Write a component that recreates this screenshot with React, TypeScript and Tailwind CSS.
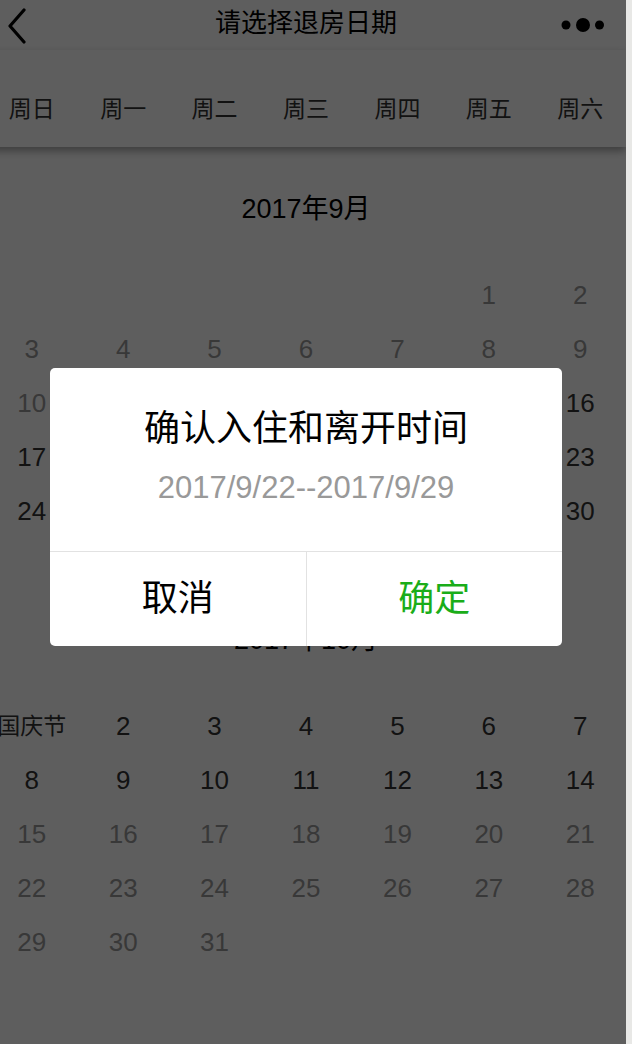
import React from "react";

const FONT = '"Liberation Sans", "Noto Sans CJK SC", sans-serif';

type Day = { label: string; gray?: boolean; sel?: boolean } | null;

function buildMonth(offset: number, days: number, isGray: (d: number) => boolean, special?: Record<number, string>, sel?: number[]): Day[][] {
  const cells: Day[] = [];
  for (let i = 0; i < offset; i++) cells.push(null);
  for (let d = 1; d <= days; d++) {
    cells.push({ label: special?.[d] ?? String(d), gray: isGray(d), sel: sel?.includes(d) });
  }
  while (cells.length % 7 !== 0) cells.push(null);
  const rows: Day[][] = [];
  for (let i = 0; i < cells.length; i += 7) rows.push(cells.slice(i, i + 7));
  return rows;
}

const sept = buildMonth(5, 30, (d) => d <= 14, undefined, [22, 29]);
const oct = buildMonth(0, 31, (d) => d >= 15, { 1: "国庆节" });

function Month({ title, rows }: { title: string; rows: Day[][] }) {
  return (
    <div className="pt-[41px] pb-[40px]">
      <div className="h-[42px] flex items-center justify-center text-[27px] text-black">{title}</div>
      <div className="mt-[38px]">
        {rows.map((r, i) => (
          <div key={i} className="grid grid-cols-7 h-[54px]">
            {r.map((c, j) => (
              <div key={j} className="flex items-center justify-center">
                {c ? (
                  c.sel ? (
                    <span className="w-[46px] h-[46px] rounded-[4px] bg-[#1aad19] text-white text-[26px] flex items-center justify-center">
                      {c.label}
                    </span>
                  ) : (
                    <span
                      className={
                        (c.label.length > 2 ? "text-[23px] " : "text-[26px] ") +
                        (c.gray ? "text-[#999999]" : "text-[#333333]")
                      }
                    >
                      {c.label}
                    </span>
                  )
                ) : null}
              </div>
            ))}
          </div>
        ))}
      </div>
    </div>
  );
}

export default function App() {
  const week = ["周日", "周一", "周二", "周三", "周四", "周五", "周六"];
  return (
    <div className="w-[632px] h-[1044px] flex overflow-hidden" style={{ fontFamily: FONT }}>
      <div className="w-[640px] shrink-0 -ml-[14px] h-[1044px] relative bg-white overflow-hidden">
        {/* nav bar */}
        <div className="h-[50px] flex items-center justify-between px-[21px] relative">
          <svg width="20" height="36" viewBox="0 0 20 36" className="mt-[2px]">
            <path d="M17 2 L3 18 L17 34" fill="none" stroke="#000" strokeWidth="3.2" strokeLinecap="round" strokeLinejoin="round" />
          </svg>
          <div className="absolute left-0 right-0 top-0 h-[47px] flex items-center justify-center text-[26px] text-black pointer-events-none">
            请选择退房日期
          </div>
          <svg width="44" height="16" viewBox="0 0 44 16">
            <circle cx="5" cy="8" r="4.5" fill="#000" />
            <circle cx="22" cy="8" r="7" fill="#000" />
            <circle cx="38.5" cy="8" r="4.5" fill="#000" />
          </svg>
        </div>
        {/* week bar */}
        <div className="h-[97px] pt-[22px] relative z-10 bg-white shadow-[0_4px_8px_rgba(0,0,0,0.35)]">
          <div className="grid grid-cols-7 h-[75px]">
            {week.map((w) => (
              <div key={w} className="flex items-center justify-center text-[23px] text-[#333333]">
                {w}
              </div>
            ))}
          </div>
        </div>
        {/* months */}
        <Month title="2017年9月" rows={sept} />
        <Month title="2017年10月" rows={oct} />

        {/* mask + dialog */}
        <div className="absolute inset-0 z-20 bg-black/[0.63] flex justify-center items-start pt-[368px]">
          <div className="w-[512px] bg-white rounded-[5px] overflow-hidden">
            <div className="pt-[39px] pb-[43px] flex flex-col items-center">
              <div className="h-[44px] leading-[44px] text-[36px] text-black">确认入住和离开时间</div>
              <div className="mt-[17px] h-[40px] leading-[40px] text-[31px] text-[#999999]">2017/9/22--2017/9/29</div>
            </div>
            <div className="h-[95px] border-t border-[#e2e2e2] flex">
              <div className="flex-1 flex items-center justify-center text-[36px] text-black border-r border-[#e2e2e2]">取消</div>
              <div className="flex-1 flex items-center justify-center text-[36px] text-[#1aad19]">确定</div>
            </div>
          </div>
        </div>
      </div>
      <div className="w-[6px] shrink-0 h-[1044px] bg-[#e8e8e6]" />
    </div>
  );
}
